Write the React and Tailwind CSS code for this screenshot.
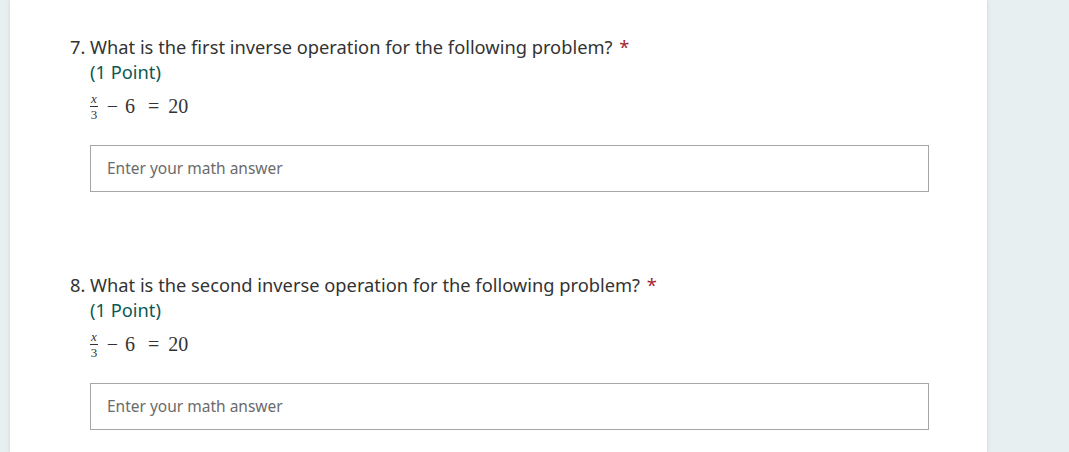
import React from 'react';

const questions = [
    { num: 7, text: 'What is the first inverse operation for the following problem?' },
    { num: 8, text: 'What is the second inverse operation for the following problem?' },
];

function MathLine() {
    return (
        <div className="flex items-center h-[34px] text-[20px] text-[#333]" style={{ fontFamily: '"Liberation Serif", serif' }}>
            <span className="inline-flex flex-col items-center leading-none text-[13px] mr-[9px]">
                <span className="italic px-[1px] border-b border-[#333] pb-[1px]">x</span>
                <span className="pt-[1px]">3</span>
            </span>
            <span className="mr-[7px]">−</span>
            <span className="mr-[13px]">6</span>
            <span className="mr-[9px]">=</span>
            <span>20</span>
        </div>
    );
}

function Question({ num, text }) {
    return (
        <div className="pt-[34px] pb-[46px]">
            <div className="flex text-[18.3px] leading-[25px] text-[#333]">
                <span className="w-[20px]">{num}.</span>
                <span>
                    {text} <span className="text-[#a4262c] ml-[2px]">*</span>
                </span>
            </div>
            <div className="pl-[20px]">
                <div className="text-[18.3px] leading-[25px] text-[#0b5a52]">(1 Point)</div>
                <div className="mt-[5px]">
                    <MathLine />
                </div>
                <input
                    type="text"
                    placeholder="Enter your math answer"
                    className="mt-[22px] w-[839px] h-[47px] border border-[#a6a6a6] px-[16px] pb-[2px] text-[15.5px] text-[#333] placeholder-[#6b6b6b] outline-none"
                />
            </div>
        </div>
    );
}

export default function App() {
    return (
        <div className="w-[1069px] h-[452px] overflow-hidden bg-[#e8eff1] flex" style={{ fontFamily: '"Noto Sans", sans-serif' }}>
            <div className="ml-[10px] w-[977px] bg-white pl-[60px] shadow-[0_0_4px_rgba(0,0,0,0.12)]">
                {questions.map((q) => (
                    <Question key={q.num} {...q} />
                ))}
            </div>
        </div>
    );
}
